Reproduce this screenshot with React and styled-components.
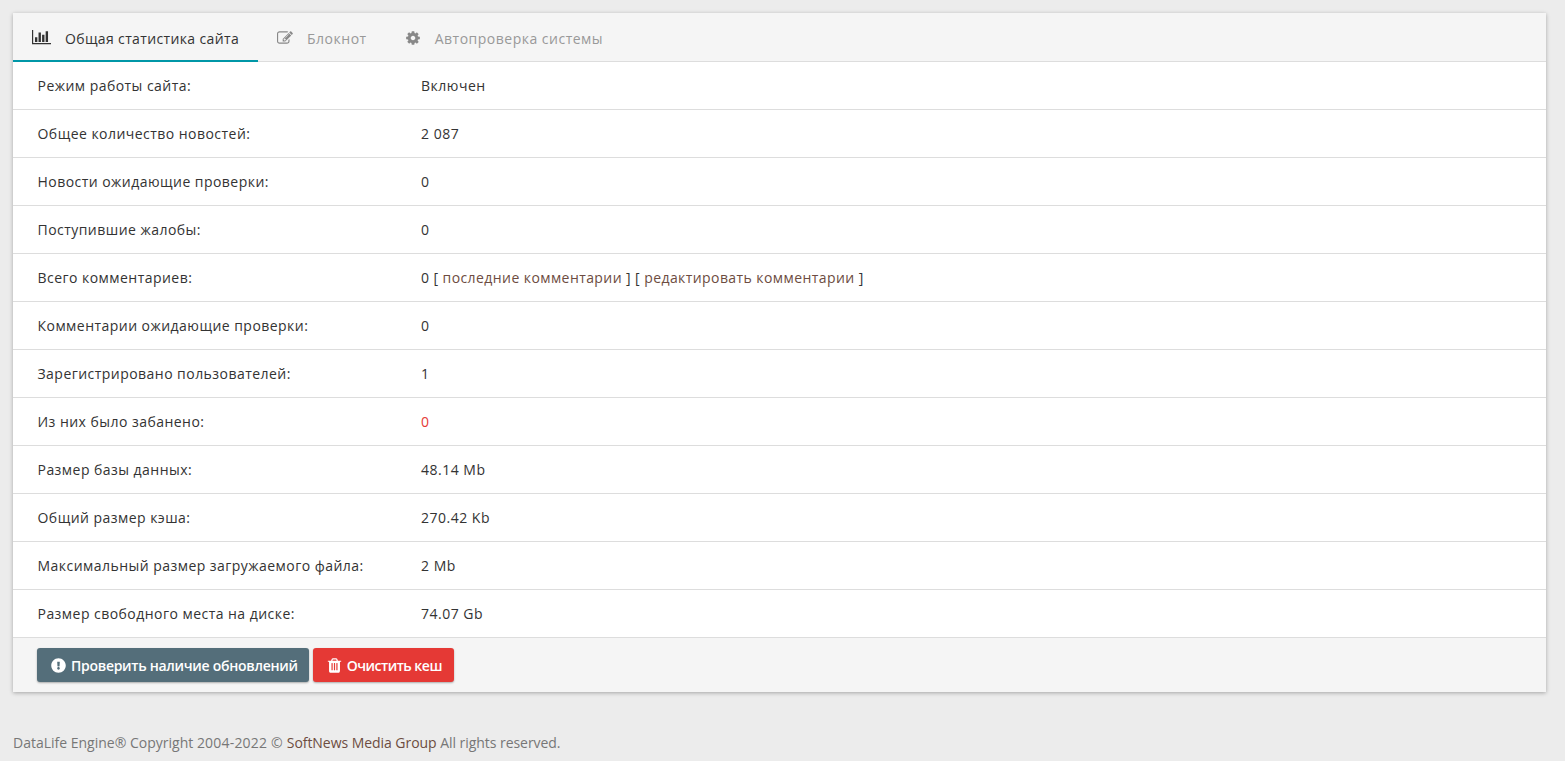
import React from "react";
import styled, { createGlobalStyle } from "styled-components";
import { FaExclamationCircle } from "react-icons/fa";

const Global = createGlobalStyle`
  html, body { margin: 0; padding: 0; background: #ececec; }
  body { font-family: "Open Sans", "Liberation Sans", sans-serif; font-size: 14px; color: #333; }
`;

const Page = styled.div`
  padding: 13px 19px 0 13px;
`;
const Card = styled.section`
  background: #fff;
  box-shadow: 0 1px 4px rgba(0, 0, 0, 0.3);
`;
const Tabs = styled.nav`
  display: flex;
  height: 49px;
  box-sizing: border-box;
  background: #f5f5f5;
  border-bottom: 1px solid #ddd;
`;
const Tab = styled.div`
  display: flex;
  align-items: center;
  gap: 14px;
  padding: 4px 19px 0;
  height: 49px;
  box-sizing: border-box;
  letter-spacing: ${(p) => p.$ls};
  color: ${(p) => (p.$active ? "#333" : "#999")};
  border-bottom: 2px solid ${(p) => (p.$active ? "#0097a7" : "transparent")};
  svg { flex: none; color: ${(p) => (p.$active ? "#333" : "#888")}; margin-top: -2px; }
`;
const Row = styled.div`
  display: grid;
  grid-template-columns: 383.5px 1fr;
  align-items: center;
  height: 48px;
  box-sizing: border-box;
  padding: 0 25px 1px 24.5px;
  border-bottom: 1px solid #ddd;
`;
const Label = styled.span`
  letter-spacing: 0.46px;
`;
const Val = styled.span`
  letter-spacing: ${(p) => p.$ls || "0.5px"};
  color: ${(p) => (p.$red ? "#e53935" : "#333")};
`;
const Link = styled.a`
  color: #6d4c41;
  text-decoration: none;
`;
const Foot = styled.div`
  display: flex;
  gap: 4px;
  height: 54px;
  box-sizing: border-box;
  padding: 10px 24px;
  background: #f5f5f5;
`;
const Btn = styled.button`
  display: flex;
  align-items: center;
  gap: ${(p) => p.$gap};
  height: 34px;
  padding: 0 ${(p) => p.$pr} 0 ${(p) => p.$pl};
  border: 0;
  border-radius: 3px;
  background: ${(p) => p.$bg};
  color: #fff;
  font: 600 14px "Open Sans", sans-serif;
  letter-spacing: ${(p) => p.$ls};
  box-shadow: 0 1px 2px rgba(0, 0, 0, 0.3);
`;
const Footer = styled.footer`
  margin-top: 41px;
  color: #777;
  line-height: 20px;
`;
const Years = styled.span`
  letter-spacing: 0.2px;
`;
const Tail = styled.span`
  letter-spacing: -0.05px;
`;
const FootLink = styled(Link)`
  letter-spacing: -0.05px;
`;

const BarsIcon = () => (
  <svg width="19" height="14.3" viewBox="0 0 2048 1536" fill="currentColor" aria-hidden="true">
    <path d="M0 0h128v1408h1920v128H0z" />
    <path d="M320 768h256v512H320zM704 256h256v1024H704zM1088 512h256v768h-256zM1472 128h256v1152h-256z" />
  </svg>
);
const EditIcon = () => (
  <svg width="16" height="13" viewBox="0 128 1800 1408" fill="currentColor" aria-hidden="true">
    <path d="M888 1184l116-116-152-152-116 116v56h96v96h56zm440-720q-16-16-33 1l-350 350q-17 17-1 33t33-1l350-350q17-17 1-33zm80 594v190q0 119-84.5 203.5t-203.5 84.5h-832q-119 0-203.5-84.5t-84.5-203.5v-832q0-119 84.5-203.5t203.5-84.5h832q63 0 117 25 15 7 18 23 3 17-9 29l-49 49q-14 14-32 8-23-6-45-6h-832q-66 0-113 47t-47 113v832q0 66 47 113t113 47h832q66 0 113-47t47-113v-126q0-13 9-22l64-64q15-15 35-7t20 29zm-96-738l288 288-672 672h-288v-288zm444 132l-92 92-288-288 92-92q28-28 68-28t68 28l152 152q28 28 28 68t-28 68z" />
  </svg>
);
const GearIcon = () => (
  <svg width="16" height="16" viewBox="0 0 1792 1792" fill="currentColor" aria-hidden="true">
    <path d="M1152 896q0-106-75-181t-181-75-181 75-75 181 75 181 181 75 181-75 75-181zm512-109v222q0 12-8 23t-20 13l-185 28q-19 54-39 91 35 50 107 138 10 12 10 25t-9 23q-27 37-99 108t-94 71q-12 0-26-9l-138-108q-44 23-91 38-16 136-29 186-7 28-36 28h-222q-14 0-24.5-8.5t-11.5-21.5l-28-184q-49-16-90-37l-141 107q-10 9-25 9-14 0-25-11-126-114-165-168-7-10-7-23 0-12 8-23 15-21 51-66.5t54-70.5q-27-50-41-99l-183-27q-13-2-21-12.5t-8-23.5v-222q0-12 8-23t19-13l186-28q14-46 39-92-40-57-107-138-10-12-10-24 0-10 9-23 26-36 98.5-107.5t94.5-71.5q13 0 26 10l138 107q44-23 91-38 16-136 29-186 7-28 36-28h222q14 0 24.5 8.5t11.5 21.5l28 184q49 16 90 37l142-107q9-9 24-9 13 0 25 10 129 119 165 170 7 8 7 22 0 12-8 23-15 21-51 66.5t-54 70.5q26 50 41 98l183 28q13 2 21 12.5t8 23.5z" />
  </svg>
);
const TrashIcon = () => (
  <svg width="17" height="17" viewBox="0 0 1792 1792" fill="currentColor" aria-hidden="true">
    <path d="M704 1376v-704q0-14-9-23t-23-9h-64q-14 0-23 9t-9 23v704q0 14 9 23t23 9h64q14 0 23-9t9-23zm256 0v-704q0-14-9-23t-23-9h-64q-14 0-23 9t-9 23v704q0 14 9 23t23 9h64q14 0 23-9t9-23zm256 0v-704q0-14-9-23t-23-9h-64q-14 0-23 9t-9 23v704q0 14 9 23t23 9h64q14 0 23-9t9-23zm-544-992h448l-48-117q-7-9-17-11h-317q-10 2-17 11zm928 32v64q0 14-9 23t-23 9h-96v948q0 83-47 143.5t-113 60.5h-832q-66 0-113-58.5t-47-141.5v-952h-96q-14 0-23-9t-9-23v-64q0-14 9-23t23-9h309l70-167q15-37 54-63t79-26h320q40 0 79 26t54 63l70 167h309q14 0 23 9t9 23z" />
  </svg>
);

const rows = [
  ["Режим работы сайта:", <Val>Включен</Val>],
  ["Общее количество новостей:", <Val>2 087</Val>],
  ["Новости ожидающие проверки:", <Val>0</Val>],
  ["Поступившие жалобы:", <Val>0</Val>],
  ["Всего комментариев:", <Val $ls="0.42px">0 [ <Link href="#">последние комментарии</Link> ] [ <Link href="#">редактировать комментарии</Link> ]</Val>],
  ["Комментарии ожидающие проверки:", <Val>0</Val>],
  ["Зарегистрировано пользователей:", <Val>1</Val>],
  ["Из них было забанено:", <Val $red>0</Val>],
  ["Размер базы данных:", <Val>48.14 Mb</Val>],
  ["Общий размер кэша:", <Val>270.42 Kb</Val>],
  ["Максимальный размер загружаемого файла:", <Val>2 Mb</Val>],
  ["Размер свободного места на диске:", <Val>74.07 Gb</Val>],
];

export default function App() {
  return (
    <Page>
      <Global />
      <Card>
        <Tabs>
          <Tab $active $ls="0.36px"><BarsIcon />Общая статистика сайта</Tab>
          <Tab $ls="0.5px"><EditIcon />Блокнот</Tab>
          <Tab $ls="0.5px"><GearIcon />Автопроверка системы</Tab>
        </Tabs>
        {rows.map(([label, value], i) => (
          <Row key={i}>
            <Label>{label}</Label>
            {value}
          </Row>
        ))}
        <Foot>
          <Btn $bg="#546e7a" $ls="-0.28px" $gap="5px" $pl="14px" $pr="11px"><FaExclamationCircle size={15} />Проверить наличие обновлений</Btn>
          <Btn $bg="#e53935" $ls="-0.5px" $gap="4px" $pl="13px" $pr="12px"><TrashIcon />Очистить кеш</Btn>
        </Foot>
      </Card>
      <Footer>DataLife Engine® Copyright <Years>2004-2022 © </Years><FootLink href="#">SoftNews Media Group</FootLink> <Tail>All rights reserved.</Tail></Footer>
    </Page>
  );
}
